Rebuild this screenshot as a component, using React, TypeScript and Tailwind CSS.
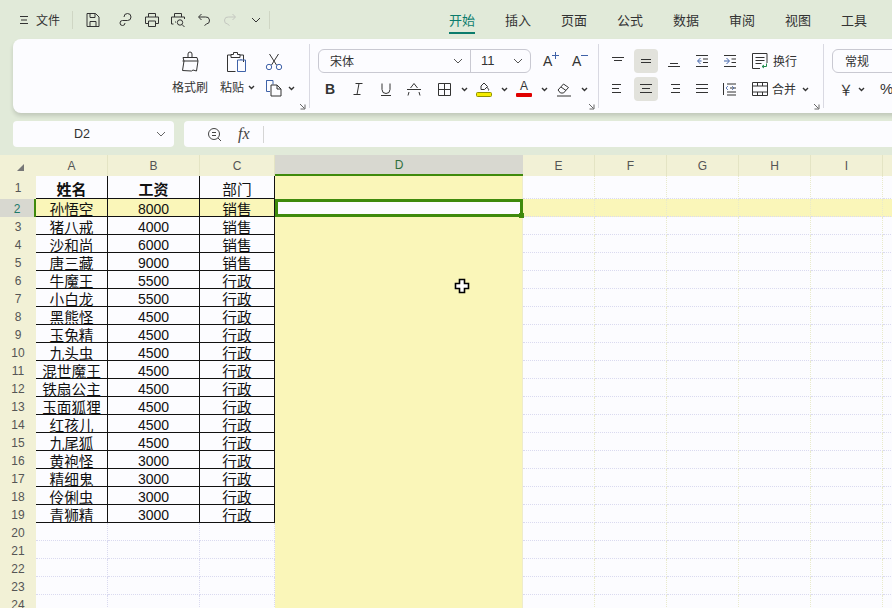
import type { ReactNode } from "react"

const fondHaut = "bg-[#e1ead9]"
const fondEntete = "bg-[#f2f1d6]"
const fondJaune = "bg-[#faf6b9]"
const fondGris = "bg-[#d8d8d0]"

const rows = [
  ["姓名", "工资", "部门"],
  ["孙悟空", "8000", "销售"],
  ["猪八戒", "4000", "销售"],
  ["沙和尚", "6000", "销售"],
  ["唐三藏", "9000", "销售"],
  ["牛魔王", "5500", "行政"],
  ["小白龙", "5500", "行政"],
  ["黑熊怪", "4500", "行政"],
  ["玉兔精", "4500", "行政"],
  ["九头虫", "4500", "行政"],
  ["混世魔王", "4500", "行政"],
  ["铁扇公主", "4500", "行政"],
  ["玉面狐狸", "4500", "行政"],
  ["红孩儿", "4500", "行政"],
  ["九尾狐", "4500", "行政"],
  ["黄袍怪", "3000", "行政"],
  ["精细鬼", "3000", "行政"],
  ["伶俐虫", "3000", "行政"],
  ["青狮精", "3000", "行政"],
]

// la colonne J commence à x=883 : sa lettre tombe hors de la fenêtre
const colonnes = ["A", "B", "C", "D", "E", "F", "G", "H", "I", ""]
const lignes = Array.from({ length: 24 }, (_, i) => i + 1)
const onglets = ["开始", "插入", "页面", "公式", "数据", "审阅", "视图", "工具"]

function Ic({ w = 16, h = 16, children, className = "" }: { w?: number; h?: number; children: ReactNode; className?: string }) {
  return (
    <svg width={w} height={h} viewBox={`0 0 ${w} ${h}`} fill="none" stroke="currentColor" strokeWidth="1" className={`shrink-0 ${className}`}>
      {children}
    </svg>
  )
}

function Chevron({ className = "" }: { className?: string }) {
  return (
    <svg width="7" height="5" viewBox="0 0 7 5" className={`shrink-0 ${className}`}>
      <path d="M1 1l2.500 2.500L6 1" fill="none" stroke="#333" strokeWidth="1.400" />
    </svg>
  )
}

function Corner() {
  return (
    <svg width="7" height="7" viewBox="0 0 7 7" className="absolute bottom-[3px] right-[3px]">
      <path d="M1 1l4.500 4.500M6 1.500V6H1.500" fill="none" stroke="#666" strokeWidth="1" />
    </svg>
  )
}

function Sep() {
  return <div className="my-[5px] w-px shrink-0 bg-[#d9d9e2]" />
}

// traits d'alignement : y, début et fin de chaque trait
function Lignes({ traits }: { traits: [number, number, number][] }) {
  return (
    <Ic w={14} h={14}>
      {traits.map(([y, a, b]) => (
        <path key={`${y}-${a}`} d={`M${a} ${y}.5H${b}`} />
      ))}
    </Ic>
  )
}

function BarreTitre() {
  return (
    <div className="flex h-[39px] items-center text-[#333]">
      <div className="flex h-[18px] w-[73px] items-center border-r border-[#cfd6c4]">
        <Ic w={10} h={10} className="ml-[19px]">
          <path d="M1 1.500h8M2 5h6M1 8.500h8" />
        </Ic>
        <span className="ml-[7px] text-[12px] leading-[18px]">文件</span>
      </div>
      <div className="flex h-[18px] w-[197px] items-center border-r border-[#cfd6c4]">
        <div className="flex w-[40px] justify-center">
          <Ic>
            <path d="M2 1.500h8.500l3.500 3.500v9.500H2zM5 1.500v4h5v-4M5 14.500v-5h6v5" />
          </Ic>
        </div>
        <div className="flex w-[27px] justify-center">
          <Ic>
            <path d="M6 5a3.500 3.500 0 1 1 3.500 3.500H4.500a2.500 2.500 0 1 0 2.500 2.500" />
          </Ic>
        </div>
        <div className="flex w-[25px] justify-center">
          <Ic>
            <path d="M4.500 5V1.500h7V5M4 11.500H1.500V5h13v6.500H12M4.500 9h7v5.500h-7z" />
          </Ic>
        </div>
        <div className="flex w-[27px] justify-center">
          <Ic>
            <path d="M4.500 5V1.500h7V5M3.500 12H1.500V5h13v2M5 10h1" />
            <circle cx="10" cy="10.500" r="2.700" />
            <path d="M12 12.500l2.500 2.500" />
          </Ic>
        </div>
        <div className="flex w-[26px] justify-center">
          <Ic>
            <path d="M5.500 2L2.500 5l3 3M3 5h6.500a3.500 3.500 0 0 1 1 7l-2 1.500" />
          </Ic>
        </div>
        <div className="flex w-[26px] justify-center text-[#c4c7c0]">
          <Ic>
            <path d="M10.500 2l3 3-3 3M13 5H6.500a3.500 3.500 0 0 0-1 7l2 1.500" />
          </Ic>
        </div>
        <div className="flex w-[26px] justify-center">
          <Ic w={10} h={6}>
            <path d="M1 1l4 4 4-4" />
          </Ic>
        </div>
      </div>
      <div className="ml-[179px] flex gap-[30px]">
        {onglets.map((o, i) => (
          <div key={o} className="relative">
            <span className={`block text-[13px] leading-[18px] ${i === 0 ? "text-[#0b7c6c]" : "text-[#333]"}`}>{o}</span>
            {i === 0 && <div className="absolute inset-x-0 top-[21px] h-[2px] bg-[#0b7c6c]" />}
          </div>
        ))}
      </div>
    </div>
  )
}

function Presse() {
  return (
    <div className="relative flex w-[296px] shrink-0 justify-end pr-[12px] pt-[12px] text-[#333]">
      <div className="flex w-[36px] flex-col items-center">
        <Ic w={20} h={22}>
          <path d="M8 6.500V3a2 2 0 0 1 4 0v3.500M3 6.500h14l1 3.500-1.500 10-3.500-1-1.500 1-9-.5 1.500-9.500z" />
          <path d="M2.500 10H18" />
        </Ic>
        <span className="mt-[5px] text-[12px] leading-[18px]">格式刷</span>
      </div>
      <div className="ml-[12px] flex w-[36px] flex-col items-start">
        <Ic w={22} h={22} className="ml-[6px]">
          <path d="M5 4H1.500v16.500h8M14 4h3.500v7M5 3.500h2.500V1.500h4v2H14v3H5z" />
          <path d="M11.500 9h8v11.500h-8z" stroke="#3f62a8" />
          <path d="M15 9v-1" stroke="#3f62a8" />
        </Ic>
        <div className="mt-[5px] flex items-center gap-[4px]">
          <span className="text-[12px] leading-[18px]">粘贴</span>
          <Chevron />
        </div>
      </div>
      <div className="ml-[9px] flex w-[32px] flex-col items-start">
        <Ic w={18} h={18} className="mt-[2px]">
          <path d="M4.500 1l7 11M13.500 1l-7 11" />
          <circle cx="4" cy="14" r="2.700" stroke="#3f62a8" />
          <circle cx="14" cy="14" r="2.700" stroke="#3f62a8" />
        </Ic>
        <div className="mt-[8px] flex items-center gap-[5px]">
          <Ic w={18} h={18}>
            <path d="M6 1.500H1.500v11H5" stroke="#3f62a8" />
            <path d="M1.500 1.500h6.500v4" stroke="#3f62a8" />
            <path d="M6 6h6l4 4v7H6zM12 6v4h4" />
          </Ic>
          <Chevron />
        </div>
      </div>
      <Corner />
    </div>
  )
}

function GroupePolice() {
  return (
    <div className="relative w-[288px] shrink-0 pt-[10px] text-[#333]">
      <div className="ml-[8px] flex h-[24px] items-center">
        <div className="flex h-[24px] w-[213px] items-center rounded-md border border-[#c9c9d2] text-[12px]">
          <div className="flex w-[152px] items-center justify-between border-r border-[#c9c9d2] pl-[11px] pr-[7px] leading-[22px]">
            <span>宋体</span>
            <Ic w={10} h={6} className="text-[#555]">
              <path d="M1 1l4 4 4-4" />
            </Ic>
          </div>
          <div className="flex flex-1 items-center justify-between pl-[10px] pr-[7px] leading-[22px]">
            <span className="font-['Liberation_Sans'] text-[13px]">11</span>
            <Ic w={10} h={6} className="text-[#555]">
              <path d="M1 1l4 4 4-4" />
            </Ic>
          </div>
        </div>
        <div className="ml-[12px] flex w-[16px] items-start font-['Liberation_Sans'] text-[14px] leading-[16px]">
          <span>A</span>
          <svg width="7" height="7" viewBox="0 0 7 7" className="-mt-[1px] shrink-0">
            <path d="M0 3.500h7M3.500 0v7" stroke="#3f62a8" />
          </svg>
        </div>
        <div className="ml-[13px] flex w-[16px] items-start font-['Liberation_Sans'] text-[14px] leading-[16px]">
          <span>A</span>
          <svg width="7" height="3" viewBox="0 0 7 3" className="mt-[1px] shrink-0">
            <path d="M0 1.500h7" stroke="#3f62a8" />
          </svg>
        </div>
      </div>
      <div className="ml-[6px] mt-[4px] flex h-[24px] items-center font-['Liberation_Sans']">
        <span className="w-[28px] text-center text-[14px] font-bold">B</span>
        <div className="flex w-[28px] justify-center">
          <Ic w={12} h={12}>
            <path d="M3.500.5h7M1.500 11.500h7M7 .5L5 11.500" />
          </Ic>
        </div>
        <div className="flex w-[28px] justify-center">
          <Ic w={12} h={13}>
            <path d="M2 .5v6a4 4 0 0 0 8 0v-6M1 12.500h10" />
          </Ic>
        </div>
        <div className="flex w-[28px] justify-center">
          <Ic w={14} h={13}>
            <path d="M3.500 5L7 .5 10.500 5M0 6.500h14M2 9l-1 3.500M12 9l1 3.500" />
          </Ic>
        </div>
        <div className="ml-[4px] flex w-[40px] items-center">
          <div className="flex w-[24px] justify-center">
            <Ic w={13} h={13}>
              <path d="M.5.500h12v12H.5zM6.500.500v12M.5 6.500h12" />
            </Ic>
          </div>
          <div className="flex flex-1 justify-center">
            <Chevron />
          </div>
        </div>
        <div className="flex w-[40px] items-center">
          <div className="flex w-[24px] justify-center">
            <Ic w={16} h={15}>
              <path d="M5 4l3-3 3.500 3.500-3 3H5z" />
              <path d="M11 5.500c1.500 1 2 2 1.500 3" />
              <rect x=".5" y="10.500" width="15" height="4" rx="1" fill="#f5ec00" stroke="#8f9000" />
            </Ic>
          </div>
          <div className="flex flex-1 justify-center">
            <Chevron />
          </div>
        </div>
        <div className="flex w-[40px] items-center">
          <div className="flex w-[24px] flex-col items-center">
            <span className="text-[12px] leading-[11px]">A</span>
            <div className="mt-[1px] h-[4px] w-[16px] rounded-[1px] bg-[#e00000]" />
          </div>
          <div className="flex flex-1 justify-center">
            <Chevron />
          </div>
        </div>
        <div className="flex w-[40px] items-center">
          <div className="flex w-[24px] justify-center">
            <Ic w={16} h={15}>
              <path d="M2 8l5.500-6 5 3.500-5 5.500H4.500zM5 5l5 3.500M1 14h14" />
            </Ic>
          </div>
          <div className="flex flex-1 justify-center">
            <Chevron />
          </div>
        </div>
      </div>
      <Corner />
    </div>
  )
}

function GroupeAlignement() {
  const haut: [number, number, number][][] = [
    [[3, 1, 13], [6, 3, 11]],
    [[5, 2, 12], [8, 2, 12]],
    [[9, 3, 11], [12, 1, 13]],
  ]
  const bas: [number, number, number][][] = [
    [[2, 1, 10], [6, 1, 8], [10, 1, 10]],
    [[2, 1, 13], [6, 3, 11], [10, 1, 13]],
    [[2, 4, 13], [6, 6, 13], [10, 4, 13]],
    [[2, 1, 13], [6, 1, 13], [10, 1, 13]],
  ]
  return (
    <div className="relative w-[224px] shrink-0 pl-[7px] pt-[10px] text-[#333]">
      <div className="flex h-[24px] items-center">
        {haut.map((t, i) => (
          <div key={i} className={`flex h-[24px] w-[24px] items-center justify-center ${i === 1 ? "rounded bg-[#e2e2dc]" : ""} ${i > 0 ? "ml-[4px]" : ""}`}>
            <Lignes traits={t} />
          </div>
        ))}
        <div className="ml-[4px] flex h-[24px] w-[24px] items-center justify-center">
          <Ic w={14} h={14}>
            <path d="M1 1.500h12M8 5h5M8 8.500h5M1 12.500h12" />
            <path d="M5.500 4L2.500 7l3 3M3 7h3.500" stroke="#3f62a8" />
          </Ic>
        </div>
        <div className="ml-[4px] flex h-[24px] w-[24px] items-center justify-center">
          <Ic w={14} h={14}>
            <path d="M1 1.500h12M8.500 5h4.500M8.500 8.500h4.500M1 12.500h12" />
            <path d="M3.500 4l3 3-3 3M1 7h5" stroke="#3f62a8" />
          </Ic>
        </div>
        <div className="ml-[10px] flex items-center gap-[5px]">
          <Ic w={16} h={16}>
            <path d="M15 10V.5H.5v15H8M3.500 4.500h9M3.500 7.500h9M3.500 10.500h6" />
            <path d="M14.500 10.500v3h-4M12 12l-2 1.500 2 1.500" stroke="#1f8a4c" />
          </Ic>
          <span className="text-[12px] leading-[18px]">换行</span>
        </div>
      </div>
      <div className="mt-[4px] flex h-[24px] items-center">
        {bas.map((t, i) => (
          <div key={i} className={`flex h-[24px] w-[24px] items-center justify-center ${i === 1 ? "rounded bg-[#e2e2dc]" : ""} ${i > 0 ? "ml-[4px]" : ""}`}>
            <Lignes traits={t} />
          </div>
        ))}
        <div className="ml-[4px] flex h-[24px] w-[24px] items-center justify-center">
          <Ic w={16} h={14}>
            <path d="M1.500 1v12M5 2h9M8 6h6M5 10h9M5 13h9" />
            <path d="M6 4L4 6l2 2M10 4l2 2-2 2" stroke="#3f62a8" strokeWidth=".8" />
          </Ic>
        </div>
        <div className="ml-[10px] flex items-center gap-[4px]">
          <Ic w={16} h={14}>
            <path d="M.5.500h15v13H.5zM.5 4h15M.5 10h15M5.500.500V4M10.500.500V4M5.500 10v3.500M10.500 10v3.500" />
          </Ic>
          <span className="text-[12px] leading-[18px]">合并</span>
          <Chevron className="ml-[2px]" />
        </div>
      </div>
      <Corner />
    </div>
  )
}

function GroupeNombre() {
  return (
    <div className="w-[120px] shrink-0 pl-[8px] pt-[10px] text-[#333]">
      <div className="flex h-[24px] w-[100px] items-center rounded-md border border-[#c9c9d2] pl-[12px] text-[12px]">常规</div>
      <div className="mt-[4px] flex h-[24px] items-center">
        <span className="ml-[7px] w-[14px] text-center text-[14px]">￥</span>
        <Chevron className="ml-[5px]" />
        <span className="ml-[15px] font-['Liberation_Sans'] text-[15px]">%</span>
      </div>
    </div>
  )
}

function BarreFormule() {
  return (
    <div className="ml-[13px] mt-[8px] flex h-[26px] gap-[10px]">
      <div className="flex w-[161px] shrink-0 items-center rounded bg-[#fcfcff] text-[#333]">
        <span className="ml-[61px] font-['Liberation_Sans'] text-[12.500px]">D2</span>
        <Ic w={10} h={6} className="ml-[66px] text-[#666]">
          <path d="M1 1l4 4 4-4" />
        </Ic>
      </div>
      <div className="flex w-[720px] shrink-0 items-center rounded-l bg-[#fcfcff] text-[#444]">
        <Ic w={15} h={15} className="ml-[23px]">
          <circle cx="7" cy="7" r="5.500" />
          <path d="M11 11l3 3M5 5.500h4M5 8.500h4" />
        </Ic>
        <span className="ml-[16px] font-['Liberation_Serif'] text-[16px] italic leading-none">fx</span>
        <div className="ml-[13px] h-[17px] w-px bg-[#d5d5d5]" />
      </div>
    </div>
  )
}

function Cellule({ ligne, col }: { ligne: number; col: number }) {
  const dansTable = col < 3 && ligne <= 19
  const enJaune = ligne === 2 || col === 3
  const fond = enJaune ? fondJaune : "bg-[#fcfcff]"
  const bord = dansTable
    ? "border-r border-b border-[#111]"
    : col === 3
      ? "border-r border-[#eeeccc]"
      : col > 3
        ? "border-r border-b border-dotted border-[#dadaf0] border-r-[#e9eacb]"
        : "border-r border-b border-dotted border-[#dadaf0]"
  const texte = dansTable ? rows[ligne - 1][col] : ""
  const estChiffre = col === 1 && ligne > 1
  return (
    <div
      className={`flex items-center justify-center whitespace-nowrap leading-[15px] text-[#111] ${fond} ${bord} ${
        estChiffre ? "pt-[4px] font-['Liberation_Sans'] text-[14px]" : ligne === 1 && col < 2 ? "pt-[2px] text-[15px] font-bold" : "pt-[2px] text-[14.670px]"
      }`}
    >
      {texte}
    </div>
  )
}

function Feuille() {
  return (
    <div className="relative mt-[8px] grid grid-cols-[36px_72px_92px_75px_248px_72px_72px_72px_72px_72px_72px] grid-rows-[21px_23px_repeat(23,18px)]">
      <div className={`flex items-center justify-center ${fondEntete}`}>
        <svg width="7" height="7" viewBox="0 0 7 7" className="ml-[4px] mt-[3px]">
          <path d="M7 0v7H0z" fill="#777" />
        </svg>
      </div>
      {colonnes.map((c, i) => (
        <div
          key={i}
          className={`flex items-center justify-center font-['Liberation_Sans'] text-[12px] ${
            i === 3 ? `${fondGris} border-b-2 border-[#3f8a0c] text-[#2f6f3c]` : `${fondEntete} border-r border-[#e4e4c4] text-[#555]`
          }`}
        >
          {c}
        </div>
      ))}
      {lignes.map((l) => (
        <div key={l} className="contents">
          <div
            className={`flex items-center justify-center pt-[1px] font-['Liberation_Sans'] text-[12px] leading-[14px] ${
              l === 2 ? `${fondGris} border-r-2 border-[#3f8a0c] text-[#1e7a6a]` : `${fondEntete} text-[#555]`
            }`}
          >
            {l}
          </div>
          {colonnes.map((_, i) =>
            l === 2 && i === 3 ? (
              // cellule active : cadre vert et poignée en bas à droite
              <div key={i} className="relative border-[3px] border-[#3f8a0c] bg-[#fcfcff]">
                <div className="absolute -bottom-[4px] -right-[4px] h-[5px] w-[5px] bg-[#3f8a0c]" />
              </div>
            ) : (
              <Cellule key={i} ligne={l} col={i} />
            ),
          )}
        </div>
      ))}
      <svg width="16" height="16" viewBox="0 0 16 16" className="absolute left-[454px] top-[123px]">
        <path d="M5.500 1.500h5v4h4v5h-4v4h-5v-4h-4v-5h4z" fill="#fff" stroke="#000" strokeWidth="1.600" />
      </svg>
    </div>
  )
}

export default function App() {
  return (
    <div className={`h-[608px] w-[892px] overflow-hidden font-['Noto_Sans_CJK_SC',sans-serif] ${fondHaut}`}>
      <BarreTitre />
      <div className="ml-[13px] flex h-[74px] w-[900px] rounded-l-lg bg-[#fcfcff] shadow-[0_3px_4px_rgba(0,0,0,0.14)]">
        <Presse />
        <Sep />
        <GroupePolice />
        <Sep />
        <GroupeAlignement />
        <Sep />
        <GroupeNombre />
      </div>
      <BarreFormule />
      <Feuille />
    </div>
  )
}
